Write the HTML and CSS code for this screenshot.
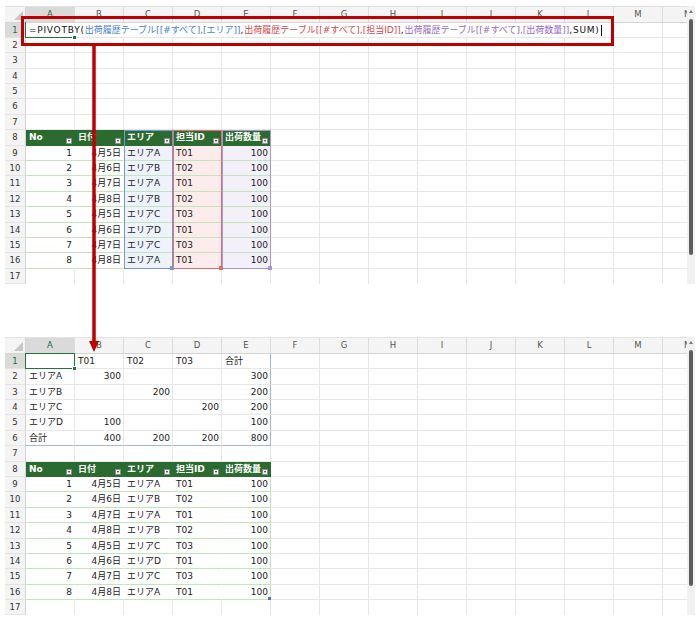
FILE: index.html
```html
<!DOCTYPE html>
<html lang="ja">
<head>
    <meta charset="UTF-8">
    <meta name="viewport" content="width=device-width, initial-scale=1.0">
    <title>PIVOTBY 関数の例</title>
    <link rel="stylesheet" href="styles.css">
</head>
<body>
    <div class="screen">
        <div class="sheet" id="sheet-source">
            <div class="grid"></div>
            <div class="vscroll">
                <span class="vscroll-up"></span>
                <span class="vscroll-thumb"></span>
            </div>
        </div>

        <div class="sheet sheet-result" id="sheet-result">
            <div class="grid"></div>
            <div class="vscroll">
                <span class="vscroll-up"></span>
                <span class="vscroll-thumb"></span>
            </div>
        </div>

        <!-- callout: formula box and arrow down to the result -->
        <div class="callout"></div>
        <svg class="arrow" width="20" height="310" viewBox="0 0 20 310">
            <line x1="10" y1="0" x2="10" y2="300" stroke="#c00000" stroke-width="3.5"/>
            <polygon points="5,297 15,297 10,308" fill="#c00000"/>
        </svg>
    </div>
    <script src="script.js"></script>
</body>
</html>
```

FILE: styles.css
```css
* {
    box-sizing: border-box;
}

body {
    margin: 0;
    background: #fff;
    font-family: "DejaVu Sans", "Noto Sans CJK JP", sans-serif;
    font-size: 9px;
    color: #1c1c1c;
}

.screen {
    position: relative;
    width: 700px;
    height: 622px;
    padding: 6px 0 0 5px;
    overflow: hidden;
}

.sheet {
    display: flex;
    width: 690px;
}

.sheet-result {
    margin-top: 53.2px;
}

.grid {
    display: grid;
    grid-template-columns: 21px repeat(13, 49px) 24px;
    grid-template-rows: 16.5px repeat(17, 15.4px);
}

/* headers */
.corner,
.col-head,
.row-head {
    background: #f4f4f4;
    color: #555;
    font-size: 8.5px;
    text-align: center;
}

.corner {
    position: relative;
    border-top: 1px solid #e2e2e2;
    border-right: 1px solid #d4d4d4;
    border-bottom: 1px solid #d4d4d4;
}

.corner::after {
    content: '';
    position: absolute;
    right: 2px;
    bottom: 2px;
    border-left: 9px solid transparent;
    border-bottom: 9px solid #c6c6c6;
}

.col-head {
    line-height: 14.5px;
    border-top: 1px solid #e2e2e2;
    border-right: 1px solid #dcdcdc;
    border-bottom: 1px solid #d4d4d4;
}

.col-head.cut {
    text-align: left;
    padding-left: 21px;
    border-right: none;
}

.row-head {
    line-height: 14.4px;
    color: #333;
    border-right: 1px solid #d4d4d4;
    border-bottom: 1px solid #e4e4e4;
}

.is-sel {
    background: #dadada;
    color: #1d6b3c;
}

/* cells */
.cell {
    position: relative;
    padding: 0 2px 0 3px;
    line-height: 14.4px;
    white-space: nowrap;
    border-right: 1px solid #e8e8e8;
    border-bottom: 1px solid #e8e8e8;
}

.cell.num {
    text-align: right;
}

.cell.last-col {
    border-right: none;
}

.cell.last-row {
    border-bottom: none;
}

.cell.flow {
    border-right-color: transparent;
}

.cell.formula {
    z-index: 3;
}

.fx-plain {
    color: #111;
    letter-spacing: 0.75px;
}

.ref-blue {
    color: #4a7fd0;
}

.ref-red {
    color: #d9474a;
}

.ref-purple {
    color: #9569c8;
}

.caret {
    display: inline-block;
    width: 1px;
    height: 11px;
    margin-left: 1px;
    background: #111;
    vertical-align: middle;
}

.active::after {
    content: '';
    position: absolute;
    top: -1px;
    left: -1px;
    right: -1px;
    bottom: -1px;
    border: 1.5px solid #217346;
    pointer-events: none;
}

.formula.active::after {
    border-right: none;
    border-top: none;
}

.fill-handle {
    position: absolute;
    right: -3px;
    bottom: -3px;
    width: 5px;
    height: 5px;
    background: #217346;
    border: 1px solid #fff;
    z-index: 1;
}

/* shipping table */
.t-head {
    background: #2b6b2f;
    color: #fff;
    font-weight: bold;
    border-right-color: #2b6b2f;
    border-bottom-color: #2b6b2f;
}

.t-body {
    border-right-color: transparent;
    border-bottom-color: #c2e5bc;
}

.t-body.t-edge {
    border-right-color: #c2e5bc;
}

.filter {
    position: absolute;
    right: 2px;
    bottom: 1px;
    width: 6px;
    height: 6px;
    background: #f0f0f0;
    border: 1px solid #8c8c8c;
}

.filter::after {
    content: '';
    position: absolute;
    left: 0.5px;
    top: 1.5px;
    border-left: 1.5px solid transparent;
    border-right: 1.5px solid transparent;
    border-top: 2px solid #333;
}

.t-handle {
    position: absolute;
    right: -1px;
    bottom: -1px;
    width: 3px;
    height: 3px;
    background: #4a74c4;
}

/* formula reference highlights */
.hl-blue {
    --hl: #7399d9;
}

.hl-red {
    --hl: #e07070;
}

.hl-purple {
    --hl: #a993dc;
}

.t-body.hl-blue {
    background: #eef2fb;
}

.t-body.hl-red {
    background: #fcecec;
}

.t-body.hl-purple {
    background: #f3f0fa;
}

.hl::before {
    content: '';
    position: absolute;
    top: 0;
    bottom: -1px;
    left: 0;
    right: -1px;
    border-left: 1.5px solid var(--hl);
    border-right: 1.5px solid var(--hl);
    pointer-events: none;
}

.hl-top::before {
    border-top: 1.5px solid var(--hl);
}

.hl-bottom::before {
    border-bottom: 1.5px solid var(--hl);
}

.hl-handle {
    position: absolute;
    right: -2px;
    bottom: -2px;
    width: 4px;
    height: 4px;
    background: var(--hl);
    z-index: 1;
}

/* spill range of the PIVOTBY result */
.sp-right {
    border-right-color: #a4b9e0;
}

.sp-bottom {
    border-bottom-color: #a4b9e0;
}

/* scrollbar */
.vscroll {
    width: 8px;
    background: #f1f1f1;
    display: flex;
    flex-direction: column;
    align-items: center;
}

.vscroll-up {
    margin-top: 4px;
    border-left: 2px solid transparent;
    border-right: 2px solid transparent;
    border-bottom: 3px solid #777;
}

.vscroll-thumb {
    margin-top: 6px;
    width: 4px;
    height: 236px;
    background: #5e5e5e;
    border-radius: 2px;
}

/* red callout */
.callout {
    position: absolute;
    left: 21px;
    top: 16px;
    width: 593px;
    height: 29.5px;
    border: 3.5px solid #c00000;
    z-index: 5;
    pointer-events: none;
}

.arrow {
    position: absolute;
    left: 84px;
    top: 44px;
    z-index: 5;
}
```

FILE: script.js
```js
const COLS = 'ABCDEFGHIJKLMN'.split('');
const ROW_COUNT = 17;

const dates = ['4月5日', '4月6日', '4月7日', '4月8日', '4月5日', '4月6日', '4月7日', '4月8日'];
const areas = ['エリアA', 'エリアB', 'エリアA', 'エリアB', 'エリアC', 'エリアD', 'エリアC', 'エリアA'];
const staff = ['T01', 'T02', 'T01', 'T02', 'T03', 'T01', 'T03', 'T01'];

const formula = [
    ['=PIVOTBY(', 'fx-plain'],
    ['出荷履歴テーブル[[#すべて],[エリア]]', 'ref-blue'],
    [',', 'fx-plain'],
    ['出荷履歴テーブル[[#すべて],[担当ID]]', 'ref-red'],
    [',', 'fx-plain'],
    ['出荷履歴テーブル[[#すべて],[出荷数量]]', 'ref-purple'],
    [',SUM)', 'fx-plain']
];

// rows 8-16: the shipping history table (出荷履歴テーブル)
function withShipTable(rows) {
    rows[8] = ['No', '日付', 'エリア', '担当ID', '出荷数量'];
    for (let i = 0; i < 8; i++) {
        rows[9 + i] = [String(i + 1), dates[i], areas[i], staff[i], '100'];
    }
    return rows;
}

const sheets = [
    {
        id: 'sheet-source',
        rows: withShipTable({}),
        formula: true,
        refs: { 2: 'blue', 3: 'red', 4: 'purple' }
    },
    {
        id: 'sheet-result',
        rows: withShipTable({
            1: ['', 'T01', 'T02', 'T03', '合計'],
            2: ['エリアA', '300', '', '', '300'],
            3: ['エリアB', '', '200', '', '200'],
            4: ['エリアC', '', '', '200', '200'],
            5: ['エリアD', '100', '', '', '100'],
            6: ['合計', '400', '200', '200', '800']
        }),
        spill: true,
        refs: {}
    }
];

function el(tag, cls, text) {
    const node = document.createElement(tag);
    if (cls) node.className = cls;
    if (text) node.textContent = text;
    return node;
}

function isNumeric(value) {
    return /^\d+$/.test(value) || /^\d+月\d+日$/.test(value);
}

function buildCell(sheet, r, c) {
    const value = (sheet.rows[r] || [])[c] || '';
    const inTable = c <= 4 && r >= 8 && r <= 16;
    const ref = inTable ? sheet.refs[c] : null;
    const cls = ['cell'];

    if (isNumeric(value)) cls.push('num');
    if (inTable) {
        cls.push(r === 8 ? 't-head' : 't-body');
        if (c === 4) cls.push('t-edge');
    }
    if (ref) {
        cls.push('hl', 'hl-' + ref);
        if (r === 8) cls.push('hl-top');
        if (r === 16) cls.push('hl-bottom');
    }
    if (sheet.spill && r <= 6 && c <= 4) {
        if (c === 4) cls.push('sp-right');
        if (r === 6) cls.push('sp-bottom');
    }
    if (sheet.formula && r === 1 && c <= 10) cls.push('flow');
    if (r === 1 && c === 0) cls.push('active');
    if (c === COLS.length - 1) cls.push('last-col');
    if (r === ROW_COUNT) cls.push('last-row');

    const cell = el('div', cls.join(' '), value);

    if (r === 1 && c === 0) {
        if (sheet.formula) {
            cell.classList.add('formula');
            formula.forEach(([text, color]) => cell.appendChild(el('span', color, text)));
            cell.appendChild(el('span', 'caret'));
        }
        cell.appendChild(el('span', 'fill-handle'));
    }
    if (inTable && r === 8) cell.appendChild(el('span', 'filter'));
    if (ref && r === 16) {
        cell.appendChild(el('span', 'hl-handle'));
    } else if (inTable && r === 16 && c === 4) {
        cell.appendChild(el('span', 't-handle'));
    }
    return cell;
}

function renderSheet(sheet) {
    const grid = document.querySelector('#' + sheet.id + ' .grid');
    grid.appendChild(el('div', 'corner'));
    COLS.forEach((name, c) => {
        let cls = 'col-head';
        if (c === 0) cls += ' is-sel';
        if (c === COLS.length - 1) cls += ' cut';
        grid.appendChild(el('div', cls, name));
    });
    for (let r = 1; r <= ROW_COUNT; r++) {
        grid.appendChild(el('div', r === 1 ? 'row-head is-sel' : 'row-head', String(r)));
        COLS.forEach((_, c) => grid.appendChild(buildCell(sheet, r, c)));
    }
}

sheets.forEach(renderSheet);
```
